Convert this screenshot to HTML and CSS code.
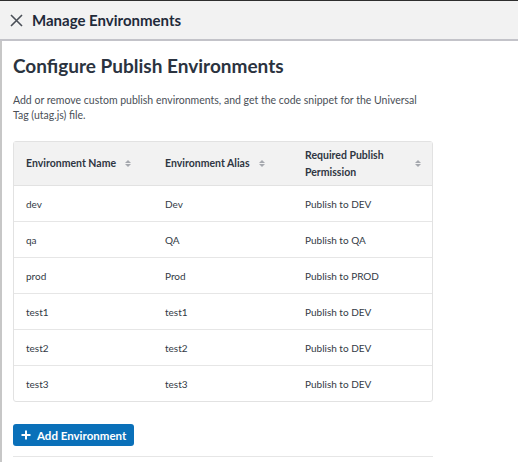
FILE: index.html
```html
<!DOCTYPE html>
<html>
<head>
<meta charset="utf-8">
<link rel="stylesheet" href="styles.css">
</head>
<body>
<div class="panel">
  <header class="topbar">
    <svg class="close" width="13" height="13" viewBox="0 0 13 13"><path d="M1 1 L12 12 M12 1 L1 12" stroke="#4a4f57" stroke-width="1.6" fill="none"/></svg>
    <span class="title">Manage Environments</span>
  </header>
  <main class="content">
    <h1 class="heading">Configure Publish Environments</h1>
    <p class="desc">Add or remove custom publish environments, and get the code snippet for the Universal Tag (utag.js) file.</p>
    <div class="table">
      <div class="row head">
        <div class="cell"><span>Environment Name</span><span class="sort"></span></div>
        <div class="cell"><span>Environment Alias</span><span class="sort"></span></div>
        <div class="cell wide"><span>Required Publish<br>Permission</span><span class="sort"></span></div>
      </div>
      <div class="row"><div class="cell">dev</div><div class="cell">Dev</div><div class="cell">Publish to DEV</div></div>
      <div class="row"><div class="cell">qa</div><div class="cell">QA</div><div class="cell">Publish to QA</div></div>
      <div class="row"><div class="cell">prod</div><div class="cell">Prod</div><div class="cell">Publish to PROD</div></div>
      <div class="row"><div class="cell">test1</div><div class="cell">test1</div><div class="cell">Publish to DEV</div></div>
      <div class="row"><div class="cell">test2</div><div class="cell">test2</div><div class="cell">Publish to DEV</div></div>
      <div class="row"><div class="cell">test3</div><div class="cell">test3</div><div class="cell">Publish to DEV</div></div>
    </div>
    <button class="add"><svg width="10" height="10" viewBox="0 0 10 10"><path d="M5 0.5 V9.5 M0.5 5 H9.5" stroke="#fff" stroke-width="2"/></svg>Add Environment</button>
    <div class="rule"></div>
  </main>
</div>
</body>
</html>
```
FILE: styles.css
```css
html, body { margin: 0; padding: 0; background: #fff; }
body { font-family: Lato, "Open Sans", sans-serif; color: #333a45; width: 518px; height: 463px; overflow: hidden; }
.panel { border-top: 1px solid #2e2e2e; height: 462px; }
.topbar {
  height: 38px; background: #f2f2f2; border-bottom: 2px solid #c3c3c9;
  display: flex; align-items: center; padding-left: 10px; gap: 9px;
}
.close { display: block; }
.title { font-size: 15px; font-weight: 700; color: #1f2a3a; }
.content { border-left: 2px solid #c7c7c7; padding: 13px 0 0 11px; height: 408px; }
.heading { margin: 0; font-size: 19px; font-weight: 700; color: #2b3340; line-height: 24px; }
.desc { margin: 15px 0 0; width: 410px; font-size: 10.5px; line-height: 15px; color: #4a4f57; }
.table {
  margin-top: 18px; width: 418px; border: 1px solid #e2e2e2; border-radius: 3px;
}
.row { box-sizing: border-box; display: grid; grid-template-columns: 139px 140px 1fr; height: 36px; border-top: 1px solid #e6e6e6; align-items: center; }
.row.head { height: 44px; background: #f2f2f2; border-top: none; border-bottom: 1px solid #e2e2e2; }
.row.head + .row { border-top: none; height: 35px; }
.cell { padding-left: 12px; font-size: 10px; display: flex; align-items: center; }
.head .cell { font-weight: 700; color: #2f3642; font-size: 10.5px; line-height: 17px; gap: 9px; }
.head .cell.wide { justify-content: space-between; padding-right: 11px; }
.sort { display: inline-flex; flex-direction: column; gap: 1px; }
.sort::before, .sort::after { content: ""; display: block; width: 0; height: 0; border-left: 3px solid transparent; border-right: 3px solid transparent; }
.sort::before { border-bottom: 3px solid #a5a8ae; }
.sort::after { border-top: 3px solid #a5a8ae; }
.add {
  margin-top: 22px; height: 22px; padding: 0 8px 0 8px; background: #0a70b9; color: #fff; border: none; border-radius: 3px;
  font-family: Lato, "Open Sans", sans-serif; font-size: 11.5px; font-weight: 700; display: flex; align-items: center; gap: 6px;
}
.rule { margin-top: 10px; width: 420px; height: 1px; background: #e6e6e6; }
```
